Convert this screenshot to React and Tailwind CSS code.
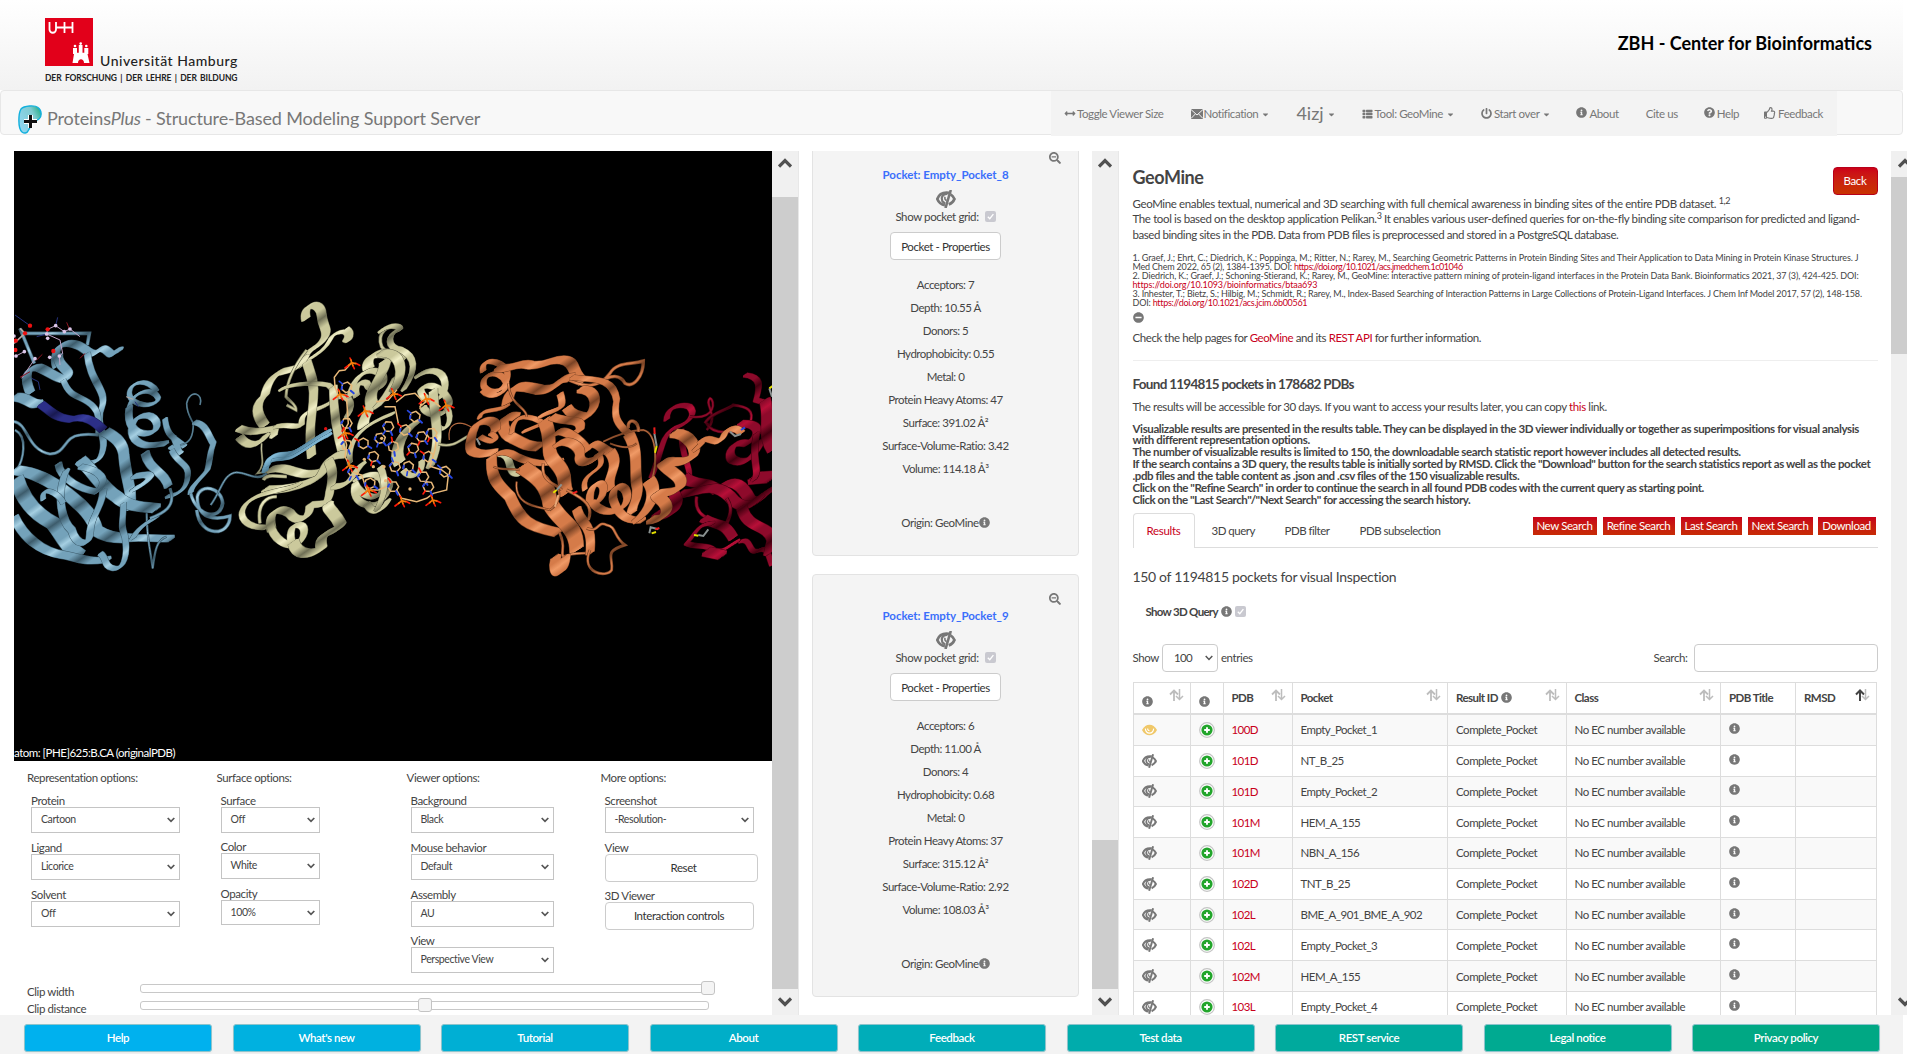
import React from "react";
import {
  FaInfoCircle, FaPowerOff, FaThList, FaQuestionCircle, FaRegThumbsUp,
  FaArrowsAltH, FaMinusCircle, FaSearchMinus, FaCaretDown,
} from "react-icons/fa";

/* ---------- small shared pieces ---------- */

function Chevron({ up, className = "" }) {
  return (
    <svg viewBox="0 0 14 10" className={`w-[14px] h-[10px] ${className}`} fill="none" stroke="#505050" strokeWidth="3.2">
      <path d={up ? "M1 8.5 7 2.5 13 8.5" : "M1 1.5 7 7.5 13 1.5"} />
    </svg>
  );
}

function Scrollbar({ before, thumb, border }) {
  return (
    <div className={`w-[27px] shrink-0 flex flex-col bg-[#f0f0f0] ${border}`}>
      <div className={`${before} shrink-0 pt-[12px] flex flex-col items-center`}>
        <Chevron up className="-mt-[5px] shrink-0" />
      </div>
      <div className={`${thumb} shrink-0 bg-[#cdcdcd]`} />
      <div className="mt-auto h-[26px] flex items-center justify-center">
        <Chevron />
      </div>
    </div>
  );
}

function EyeOff({ className }) {
  return (
    <svg viewBox="0 0 20 18" className={className} fill="none" stroke="#777">
      <path d="M13 2.8C5 1.700 2.400 6 1.300 9c1 2.400 3.400 5.600 7.600 6" strokeWidth="2.800" />
      <path d="M14.500 4.400c2 1 3.300 3.200 4 4.600-.8 2-2.600 4.300-5.700 5.600" strokeWidth="2.700" />
      <path d="M11.500 4C6.300 3.500 4.800 8 6.300 11c.8 1.500 2 2 3 2.100" strokeWidth="2.300" />
      <path d="M9 6.800c-.5 2 .3 3.400 1.700 3.600" strokeWidth="1.600" />
      <path d="M14.800 0 9.500 18" strokeWidth="2.600" />
    </svg>
  );
}

function EyeOn() {
  return (
    <svg viewBox="0 0 16 12" className="w-[15px] h-[12px]">
      <path d="M0 6C2 2 5 .3 8 .3S14 2 16 6c-2 4-5 5.700-8 5.700S2 10 0 6Z" fill="#f0c869" />
      <path d="M3.500 4.500C4 8 6 9.300 8 9.300s4-1.300 4.500-4.800" fill="none" stroke="#fff" strokeWidth="1.200" />
      <path d="M6 4.300C6 6 7 6.800 8 6.800" fill="none" stroke="#fff" strokeWidth="1.200" />
    </svg>
  );
}

function Check() {
  return (
    <span className="inline-flex w-[11px] h-[11px] rounded-[2px] bg-[#c9c9d0] items-center justify-center">
      <svg viewBox="0 0 10 10" className="w-[9px] h-[9px]" fill="none" stroke="#fff" strokeWidth="1.500"><path d="M2 5.200 4.200 7.400 8.200 2.400" /></svg>
    </span>
  );
}

/* ---------- header ---------- */

function Logo() {
  return (
    <div className="ml-[45px] pt-[18px] w-[200px] text-[#222]">
      <div className="flex items-end">
        <svg viewBox="0 0 48 48" className="w-[48px] h-[48px] shrink-0">
          <rect width="48" height="48" fill="#e2001a" />
          <path d="M4.500 4v7.500a3.200 3.200 0 0 0 6.500 0V4M12.500 9.500h7M19.500 4v11M27.500 4v11M19.500 9.500h8M11 9.500h2" fill="none" stroke="#fff" strokeWidth="1.800" />
          <g fill="#fff">
            <path d="M27.500 45 29 36h13.500L44.500 45h-5.500c0-5-6-5-6 0Z" />
            <path d="M28 30h4v4.800h1.800V27h3.700v7.800h1.800V30h4v6H28Z" />
            <circle cx="30" cy="28" r="1.300" /><circle cx="35.700" cy="25.600" r="1.300" /><circle cx="41.300" cy="28" r="1.300" />
          </g>
        </svg>
        <span className="ml-[7px] mb-[-5px] leading-[20px] text-[14px] font-medium tracking-[0.52px] whitespace-nowrap">Universität Hamburg</span>
      </div>
      <div className="mt-[7px] leading-[10px] text-[8.5px] font-bold tracking-[-0.1px] whitespace-nowrap [word-spacing:1.4px]">DER FORSCHUNG | DER LEHRE | DER BILDUNG</div>
    </div>
  );
}

function Caret() {
  return <FaCaretDown className="ml-[4px] mt-px w-[7px] h-[9px]" />;
}

function NavItem({ icon, children, gap = "mr-[27px]", caret }) {
  return (
    <a className={`flex items-center shrink-0 whitespace-nowrap ${gap}`}>
      {icon}{children}{caret && <Caret />}
    </a>
  );
}

function Header() {
  return (
    <header className="w-[1903px]">
      <div className="h-[90px] flex justify-between bg-linear-to-b from-white to-[#f2f2f2]">
        <Logo />
        <h1 className="mr-[31px] mt-[31px] text-[18px] leading-[24px] font-bold text-black tracking-normal whitespace-nowrap">ZBH - Center for Bioinformatics</h1>
      </div>
      <nav className="h-[45px] border border-[#e7e7e7] rounded-[4px] bg-[#f8f8f8] flex text-[#777]">
        <div className="w-[1050px] flex pl-[17px] pt-[14px]">
          <svg viewBox="0 0 24 29" className="w-[24px] h-[29px]">
            <defs>
              <linearGradient id="plogo" x1="0" y1="0.600" x2="1" y2="0"><stop offset="0" stopColor="#8fd6ef" /><stop offset="0.600" stopColor="#7fcbd0" /><stop offset="1" stopColor="#12a878" /></linearGradient>
            </defs>
            <path d="M3 4C6 .5 17 0 20 2.500c4 3 4 9 1 11.500-3 2-9 3-9 7 .5 2-1 3-2 5-1 2.500-4 2.500-6 1C-.5 23 .5 8 3 4Z" fill="url(#plogo)" stroke="#12b0dd" strokeWidth="1.400" />
            <path d="M12.500 10v13M6 16.500h13" stroke="#fff" strokeWidth="5" /><path d="M12.500 10v13M6 16.500h13" stroke="#111" strokeWidth="3" />
          </svg>
          <span className="ml-[5px] mt-px text-[18px] leading-[24px] tracking-[-0.14px] whitespace-nowrap">Proteins<i className="tracking-[-0.25px]">Plus</i> - Structure-Based Modeling Support Server</span>
        </div>
        <div className="w-[786px] h-[45px] bg-[#f3f3f3] flex items-center pl-[13px] text-[11.5px] tracking-[-0.4px]">
          <NavItem icon={<FaArrowsAltH className="w-[12px] h-[11px] mr-px" />}>Toggle Viewer Size</NavItem>
          <NavItem caret icon={<svg viewBox="0 0 12 10" className="w-[12px] h-[10px] mr-px"><rect width="12" height="10" fill="#777" /><path d="M0 .5 6 6 12 .5M0 9.500 4.300 5M12 9.500 7.700 5" fill="none" stroke="#f3f3f3" /></svg>}>Notification</NavItem>
          <NavItem caret gap="mr-[26px]"><span className="text-[18px] tracking-normal">4izj</span></NavItem>
          <NavItem caret icon={<FaThList className="w-[13px] h-[10px] mr-px" />}>Tool: GeoMine</NavItem>
          <NavItem caret gap="mr-[26px]" icon={<FaPowerOff className="w-[11px] h-[11px] mr-[2px]" />}>Start over</NavItem>
          <NavItem icon={<FaInfoCircle className="w-[11px] h-[11px] mr-[2px] mb-[2px]" />}>About</NavItem>
          <NavItem gap="mr-[26px]">Cite us</NavItem>
          <NavItem gap="mr-[25px]" icon={<FaQuestionCircle className="w-[11px] h-[11px] mr-[2px] mb-[2px]" />}>Help</NavItem>
          <NavItem gap="" icon={<FaRegThumbsUp className="w-[12px] h-[12px] mr-[2px] mb-[2px]" />}>Feedback</NavItem>
        </div>
      </nav>
    </header>
  );
}

/* ---------- molecule scene ---------- */

const LEFT = [
  ["blue", 12, "M60 115 L103 220"],
  ["blue", 12, "M75 130 H268 L262 165"],
  ["blue", 22, "M170 230 C150 160 210 140 262 183 C300 210 290 150 330 190 C345 200 345 175 362 180"],
  ["blue", 24, "M92 310 C70 260 80 232 115 232 C150 245 175 270 198 268 C225 240 170 235 175 195"],
  ["blue", 17, "M262 190 C270 280 325 300 305 355 C285 400 315 430 310 470 C305 510 290 520 250 520"],
  ["blue", 14, "M190 270 C210 330 250 315 280 350 C300 370 295 400 295 430"],
  ["blue", 28, "M42 322 C80 315 90 350 120 340"],
  ["navy", 22, "M122 342 C160 370 170 385 215 388 C260 372 290 400 310 420"],
  ["blue", 10, "M42 395 C85 400 80 480 150 492 C200 490 190 440 240 435 C270 430 285 435 295 435"],
  ["blue", 8, "M45 420 C85 440 70 510 50 540"],
  ["blue", 28, "M315 425 C345 440 372 460 372 500 C380 580 398 600 390 655"],
  ["blue", 13, "M470 305 C450 265 390 270 388 310 C390 350 470 355 475 325 C460 290 400 300 388 350"],
  ["blue", 19, "M388 350 C380 400 400 435 445 430 C485 425 475 378 440 376 C395 378 385 420 405 448 C430 475 460 465 500 460"],
  ["blue", 14, "M495 385 C500 440 520 440 555 470 M510 470 L545 490 M520 440 L540 490"],
  ["blue", 22, "M435 487 C445 540 495 545 505 590"],
  ["blue", 14, "M515 480 C530 520 570 520 563 560 C560 600 530 615 500 620"],
  ["blue", 5, "M600 345 C612 310 570 295 560 340 C560 370 575 390 580 400 C580 440 570 460 540 465"],
  ["blue", 16, "M582 397 C620 400 625 440 640 460 C625 500 632 510 622 540 C600 570 570 590 572 610"],
  ["blue", 12, "M572 610 C590 680 660 695 668 640 C665 590 600 580 592 620 C590 690 650 690 690 678 C690 740 600 745 590 660"],
  ["blue", 7, "M632 645 C665 600 670 550 710 547 C750 550 770 575 800 550"],
  ["blue", 32, "M45 540 C100 545 150 570 200 610 C250 650 280 680 290 722 C330 748 370 745 390 745"],
  ["blue", 36, "M50 565 C70 640 120 680 160 700 C190 740 200 770 240 797"],
  ["blue", 24, "M42 680 C70 740 120 785 190 795 C230 800 250 820 325 808"],
  ["blue", 32, "M240 510 C280 540 300 590 350 620 C380 650 420 650 470 655"],
  ["blue", 18, "M175 520 C180 570 250 600 290 605 C330 570 300 540 240 530"],
  ["blue", 20, "M200 540 C170 600 180 690 215 720 C230 770 270 770 270 730 C270 680 305 660 310 600"],
  ["blue", 16, "M370 640 C370 700 360 700 375 740 C385 800 370 840 340 835 C310 830 320 800 300 790"],
  ["blue", 14, "M130 630 C120 580 180 610 190 640"],
  ["blue", 22, "M400 560 C440 550 450 555 450 562 C430 590 400 595 400 600"],
  ["blue", 24, "M395 745 C430 740 480 748 515 745"],
  ["blue", 7, "M440 670 C440 750 455 800 458 835 C465 780 470 750 500 740"],
  ["blue", 18, "M398 745 C420 700 460 690 470 680"],
  ["blue", 10, "M510 595 C530 650 490 670 450 685"],
  ["cream", 24, "M918 88 C905 40 962 30 965 75 C968 110 985 120 975 140 C960 175 930 170 915 200"],
  ["cream", 14, "M1040 115 C1062 130 1050 160 1035 150 C1060 115 1000 120 990 150 C970 190 930 200 900 230"],
  ["cream", 26, "M915 200 C900 240 865 240 845 245 C810 260 800 290 795 315 C765 340 765 370 795 408"],
  ["cream", 10, "M920 180 C880 230 860 280 858 320 C870 335 890 345 888 360 L860 345"],
  ["cream", 22, "M715 415 C750 430 775 425 825 415 L820 440"],
  ["cream", 22, "M718 440 C745 475 775 468 800 435"],
  ["cream", 6, "M785 460 C780 500 800 520 772 550 L830 540"],
  ["cream", 16, "M825 410 C870 400 880 415 905 405 C900 350 960 370 1000 330 C1040 300 1070 340 1040 380"],
  ["cream", 24, "M920 215 C935 260 945 290 940 330 C935 390 925 420 935 500"],
  ["cream", 13, "M840 300 C880 275 960 280 985 285 C1020 310 1000 350 1005 400"],
  ["cream", 22, "M1000 290 C1000 370 1010 430 1030 500"],
  ["cream", 26, "M810 540 C860 520 900 570 960 545"],
  ["cream", 30, "M795 600 C850 600 900 590 940 570 C990 550 960 490 1045 492"],
  ["cream", 16, "M800 712 C740 715 705 680 740 640 C780 600 860 605 900 580"],
  ["cream", 12, "M790 570 C800 550 830 560 860 560 M780 700 C770 640 800 620 830 620"],
  ["cream", 24, "M815 720 C800 660 840 650 870 670 C890 700 930 690 930 645 C970 640 985 650 990 600 C1000 560 1000 540 985 510"],
  ["cream", 20, "M810 700 C820 750 860 770 890 765 C920 740 920 700 890 705 C860 710 870 780 900 790"],
  ["cream", 30, "M880 755 C890 800 935 795 965 775 C950 720 1010 730 1022 705 C1000 660 980 660 985 640"],
  ["cream", 22, "M1000 590 C1060 590 1060 540 1090 520"],
  ["cream", 12, "M1200 112 C1160 100 1130 130 1145 170 C1165 195 1190 200 1200 220"],
  ["cream", 30, "M1108 240 C1085 200 1150 165 1205 215"],
  ["cream", 18, "M1050 320 C1060 250 1120 220 1150 260 C1160 300 1110 310 1100 280 C1080 270 1060 290 1070 320"],
  ["cream", 32, "M1155 210 C1160 250 1100 300 1115 340 C1105 370 1085 390 1090 410"],
  ["cream", 14, "M1050 520 C1040 440 1100 400 1180 370"],
  ["cream", 24, "M1190 260 C1170 300 1150 330 1130 350"],
  ["cream", 18, "M1065 570 C1100 550 1150 540 1150 590 C1140 640 1080 620 1065 580 C1050 640 1120 670 1155 620 C1180 580 1170 570 1130 560"],
  ["cream", 18, "M1100 640 C1120 680 1150 660 1165 630"],
  ["sky", 17, "M795 545 C800 490 850 512 880 498 C920 478 950 448 990 433"],
  ["sky", 17, "M801 528 C805 482 850 502 880 488 C920 468 950 440 988 423"],
];

const RIGHT = [
  ["cream", 16, "M0 125 C30 100 60 108 60 118 C20 130 20 175 60 178 C110 200 110 240 70 300"],
  ["cream", 26, "M0 190 C60 180 80 240 40 300"],
  ["cream", 18, "M110 260 C150 230 190 240 195 280 C200 340 130 345 122 300 C150 260 220 320 205 350 C190 390 130 370 130 350"],
  ["cream", 14, "M200 350 C225 400 190 430 175 410"],
  ["cream", 24, "M160 300 C160 390 190 440 150 530"],
  ["cream", 32, "M105 400 C60 430 40 490 60 520"],
  ["cream", 17, "M70 540 C90 570 130 560 125 510 M0 530 C30 590 0 640 -10 660"],
  ["cream", 9, "M175 462 C220 475 240 450 265 438"],
  ["cream", 18, "M350 492 C400 485 380 540 405 550 C430 560 430 530 460 532"],
  ["red", 16, "M1095 255 C1145 260 1140 290 1128 330 L1180 345"],
  ["red", 17, "M860 390 C860 350 900 340 928 350 C950 370 930 400 880 415 C845 440 850 470 815 560"],
  ["red", 9, "M930 380 C1010 390 1005 330 990 325 C970 340 1020 380 980 420"],
  ["red", 10, "M975 400 C990 370 1040 360 1060 345 C1100 350 1125 360 1110 400 C1080 430 1000 440 980 400"],
  ["red", 24, "M1080 400 C1150 400 1140 440 1100 460 C1050 450 1040 500 1060 510 C1100 530 1130 490 1145 450"],
  ["red", 30, "M1155 330 C1170 380 1145 430 1178 480"],
  ["red", 14, "M905 420 C900 500 940 540 925 570"],
  ["red", 30, "M910 560 C940 590 980 570 1010 600 C1060 555 1090 590 1110 630 C1140 650 1150 600 1178 600"],
  ["red", 30, "M900 612 C960 610 1000 570 1050 620 C1080 660 1120 650 1140 620"],
  ["red", 28, "M825 672 C880 690 910 640 880 610"],
  ["red", 12, "M950 620 C940 680 990 690 1040 700 C1060 660 1050 640 1040 625"],
  ["red", 26, "M970 685 C1010 710 1030 690 1060 745"],
  ["red", 14, "M1080 755 C1120 740 1100 800 1140 780 C1165 770 1165 800 1176 825"],
  ["red", 15, "M1000 700 C950 700 950 730 920 760 C950 775 980 760 1000 780 C1030 790 1040 770 1075 752"],
  ["red", 32, "M978 785 L1028 796"],
  ["red", 44, "M1120 565 L1178 560"],
  ["red", 28, "M1085 650 C1100 720 1160 700 1176 745 L1165 790"],
  ["red", 18, "M1130 430 C1110 520 1145 540 1120 570"],
  ["orange", 16, "M310 245 C300 205 350 205 380 240 C395 290 340 325 312 290 C300 250 360 235 378 275 C385 315 330 330 308 300"],
  ["orange", 28, "M352 235 C400 240 410 215 450 225 C500 230 505 205 550 210 C590 215 575 255 610 275"],
  ["orange", 11, "M550 262 C620 300 660 290 690 250 C710 215 750 225 790 213 C790 260 760 295 735 280 C720 250 690 260 680 265"],
  ["orange", 32, "M382 340 C390 270 440 290 480 300 C540 300 525 265 575 262"],
  ["orange", 17, "M575 262 C640 270 700 260 710 330 C700 380 710 400 745 430"],
  ["orange", 13, "M298 385 C305 350 350 370 385 345"],
  ["orange", 30, "M410 380 C360 370 360 420 390 440 C430 460 440 470 480 470"],
  ["orange", 26, "M345 425 C360 390 310 380 285 410 C270 440 265 480 280 485 C310 500 330 485 345 487"],
  ["orange", 14, "M300 440 C350 470 360 440 330 430 M395 430 C400 360 460 380 490 400 L430 425"],
  ["orange", 19, "M340 500 C360 485 380 480 410 500 C450 520 500 525 545 512"],
  ["orange", 34, "M492 390 C520 440 495 480 520 510 C570 560 545 580 560 610"],
  ["orange", 18, "M480 380 C530 350 560 370 540 310"],
  ["orange", 26, "M600 298 C655 300 655 350 620 380 C590 380 570 370 560 352"],
  ["orange", 24, "M515 380 C560 400 610 380 600 420 C560 430 580 450 600 480"],
  ["orange", 24, "M530 430 C550 410 600 450 620 480 C650 440 660 480 695 488"],
  ["orange", 26, "M530 465 C560 440 600 470 600 490 C590 530 640 520 660 490"],
  ["orange", 14, "M660 500 C680 550 600 540 615 600"],
  ["orange", 28, "M690 485 C725 530 675 560 690 600"],
  ["orange", 28, "M745 430 C780 490 760 540 772 590 C775 640 755 640 755 670"],
  ["orange", 6, "M670 455 C720 430 760 420 790 420 C835 430 830 530 815 570 M690 460 C740 480 760 470 770 460"],
  ["orange", 11, "M745 415 C740 380 780 390 775 425"],
  ["orange", 21, "M630 640 C620 570 690 560 665 620 C640 660 630 630 640 640 C670 680 740 670 742 620 C740 575 690 580 700 630 C715 680 750 695 790 690"],
  ["orange", 34, "M805 570 C830 600 820 650 770 690"],
  ["orange", 30, "M880 430 C930 430 955 480 938 500 C900 530 860 505 848 520 C870 550 915 560 900 592 C870 620 815 600 832 620 C880 650 860 690 810 690"],
  ["orange", 20, "M960 455 C990 430 1010 475 1030 440 C1040 410 1070 410 1085 430 M945 480 L965 460"],
  ["orange", 28, "M335 500 C330 570 360 590 390 620 C420 690 440 710 535 728"],
  ["orange", 38, "M425 530 C470 560 505 580 510 640 C540 700 590 700 590 780"],
  ["orange", 7, "M340 530 C360 540 380 535 420 540 M410 575 C400 650 480 650 510 660 C540 640 540 610 535 600"],
  ["orange", 9, "M538 728 C560 770 540 790 550 800 C600 780 620 800 630 780"],
  ["orange", 30, "M528 800 C515 850 550 870 555 800"],
  ["orange", 24, "M590 655 C600 710 640 690 630 790"],
  ["orange", 9, "M630 780 C600 850 680 865 695 840 C700 800 670 785 735 765 C700 740 710 710 680 705 C650 690 660 730 620 715"],
  ["orange", 10, "M560 600 C620 630 640 650 625 690 M490 520 C480 580 530 580 545 600"],
  ["orange", 3, "M208 450 C200 395 240 390 275 412"],
  ["orange", 8, "M385 280 C390 350 440 350 440 380"],
];

const SHADES = {
  blue: ["#3d5c6c", "#74a2ba", "#a5cfe2"],
  sky: ["#4d7b93", "#82b9d6", "#9fd0ea"],
  navy: ["#191a52", "#2c2f88", "#3a3fa0"],
  cream: ["#6f6f55", "#cbc99c", "#f0eec6"],
  orange: ["#7a4325", "#d57b49", "#f09a66"],
  red: ["#42000f", "#8e0a2b", "#b80f38"],
};

/* A flat band: copies of the path are spread along a slanted nib, so its width varies with its direction. */
const NIB = [-0.5, -0.34, -0.17, 0, 0.17, 0.34, 0.5];

function Ribbon({ tone, w, d }) {
  if (w < 13) {
    return (
      <g fill="none">
        <path d={d} stroke={SHADES[tone][0]} strokeWidth={w * 0.85 + 1} />
        <path d={d} stroke={`url(#g-${tone})`} strokeWidth={Math.max(w * 0.85 - 3, 1.8)} />
      </g>
    );
  }
  const s = w * 0.34;
  return (
    <g fill="none" strokeLinejoin="round">
      {NIB.map((k) => <path key={k} d={d} transform={`translate(${k * w * 0.75} ${-k * w * 0.52})`} stroke={SHADES[tone][0]} strokeWidth={s + 3} />)}
      {NIB.map((k) => <path key={k} d={d} transform={`translate(${k * w * 0.75} ${-k * w * 0.52})`} stroke={`url(#g-${tone})`} strokeWidth={s} />)}
    </g>
  );
}

/* base pairs of the bound strand: centre x, centre y, turn */
const BASES = [
  [1040, 292, 10], [1040, 400, 30], [1090, 460, 0], [1140, 445, 20], [1180, 470, 50], [1120, 500, 15], [1185, 530, 40],
  [1110, 580, 5], [1180, 590, 30], [1165, 410, 35], [1215, 420, 12], [1240, 475, 44],
  [1245, 380, 10], [1265, 440, 22], [1285, 500, 5], [1225, 530, 10], [1270, 560, 33],
  [1295, 430, 25], [1335, 545, 12], [1285, 590, 36], [1040, 465, 40], [1060, 545, 25],
];
const BACKBONE = [
  "M1005 290 L1003 262 L1018 242 L1035 240 L1055 218", "M1005 290 L1015 318 L1040 330 L1045 400 L1030 428 L1040 465 L1035 500 L1048 525",
  "M1055 545 L1085 555 L1100 600 L1135 600 L1160 590", "M1130 335 L1165 330 L1190 300 M1155 350 L1185 350 L1195 400",
  "M1190 335 L1215 315 L1245 310 L1265 330 L1260 355 M1260 350 L1290 325 L1320 350",
  "M1295 530 L1325 540 L1345 555 L1340 600 L1300 610 L1280 625 L1250 635 L1205 625 L1190 600", "M1310 440 L1305 480 L1290 530",
];
const PHOSPHATES = [[1055, 218], [1020, 312], [1095, 362], [1035, 428], [1048, 525], [1105, 600], [1180, 310], [1278, 325], [1338, 345], [1205, 632], [1298, 630]];

function Ligand() {
  return (
    <g fill="none" strokeLinecap="round" strokeWidth="4.500">
      {BACKBONE.map((d) => <path key={d} d={d} stroke="#e8b878" />)}
      {BASES.map(([x, y, r], i) => (
        <g key={i} transform={`translate(${x} ${y}) rotate(${r})`}>
          <path d="M-14 -8 L0 -16 L14 -8 L14 8 L0 16 L-14 8 Z" stroke="#e8b878" />
          <path d="M-14 8 L-14 0 M14 8 L24 14" stroke="#2646e0" strokeWidth="6" />
          <path d={i % 2 ? "M0 16 L0 27" : "M-14 -8 L-25 -14"} stroke={i % 3 ? "#ff1708" : "#2646e0"} strokeWidth="5" />
        </g>
      ))}
      {PHOSPHATES.map(([x, y]) => (
        <g key={`${x}-${y}`} strokeWidth="5">
          <path d={`M${x - 20} ${y + 16} L${x - 8} ${y + 7} M${x + 12} ${y + 2} L${x + 24} ${y + 8} M${x - 2} ${y - 8} L${x - 5} ${y - 14} M${x + 4} ${y + 10} L${x + 8} ${y + 18}`} stroke="#ff1708" />
          <path d={`M${x - 9} ${y + 8} L${x} ${y} L${x + 12} ${y + 3} M${x} ${y} L${x - 2} ${y - 8} M${x} ${y} L${x + 4} ${y + 9}`} stroke="#f57c0a" />
        </g>
      ))}
      {[[1093, 508], [1120, 530], [1152, 530], [1157, 572], [1230, 597], [1145, 445]].map(([x, y]) => <circle key={x} cx={x} cy={y} r="5" fill="#e8b878" stroke="none" />)}
    </g>
  );
}

const ATOMS = [
  [90, 107, "r"], [75, 130, "r"], [143, 118, "r"], [47, 152, "r"], [46, 180, "r"], [160, 183, "r"],
  [167, 107, "w"], [193, 125, "w"], [210, 117, "w"], [140, 132, "w"], [143, 145, "w"], [73, 185, "w"], [48, 198, "w"], [105, 206, "w"], [149, 202, "w"], [178, 198, "w"], [42, 138, "w"],
];

function Molecule() {
  return (
    <svg viewBox="0 0 758 610" className="block w-[758px] h-[610px]">
      <defs>
        {Object.entries(SHADES).map(([k, [dark, mid, light]]) => (
          <linearGradient key={k} id={`g-${k}`} gradientUnits="userSpaceOnUse" x1="0" y1="0" x2="40" y2="52" spreadMethod="reflect">
            <stop offset="0" stopColor={dark} /><stop offset="0.350" stopColor={mid} /><stop offset="0.750" stopColor={mid} /><stop offset="1" stopColor={light} />
          </linearGradient>
        ))}
      </defs>
      <rect width="758" height="610" fill="#000" />
      <g transform="translate(-14 139) scale(0.33333)">
        {LEFT.map(([t, w, d], i) => <Ribbon key={i} tone={t} w={w} d={d} />)}
        <g fill="none" strokeWidth="3">
          <path d="M42 160 L75 130 L60 115" stroke="#b9a9a4" strokeWidth="5" />
          <path d="M140 132 L143 118 L167 107 L193 125 L210 117 L240 140 M48 198 L73 185 M140 132 L180 150 L188 190 L178 198 L180 225 M65 265 L105 206" stroke="#bfa2c6" />
          <path d="M45 75 L90 107 M167 107 L173 82 M110 140 L140 132 M95 265 L115 275 L120 300 M405 335 L415 350" stroke="#26337e" />
          <path d="M200 97 L208 117 M240 205 L255 190 M60 262 L90 245 M110 210 L127 193" stroke="#8d1420" />
          <path d="M378 320 L400 328" stroke="#b9a9a4" />
          <circle cx="977" cy="416" r="5" fill="#e01010" />
        </g>
        {ATOMS.map(([x, y, k]) => <circle key={`${x}${y}`} cx={x} cy={y} r={k === "r" ? 6.5 : 5.5} fill={k === "r" ? "#ee1111" : "#dcc6e8"} />)}
      </g>
      <g transform="translate(366 139) scale(0.33333)">
        {RIGHT.map(([t, w, d], i) => <Ribbon key={i} tone={t} w={w} d={d} />)}
        <g fill="none" strokeWidth="6">
          <path d="M545 583 L530 600 M823 430 L830 468 M290 445 L300 465 M835 718 L812 712 L808 730 M985 718 L970 738 L955 735 M1050 425 L1065 438 L1083 432 M1168 295 L1176 320" stroke="#8a9190" />
          <path d="M530 600 L520 608 M830 468 L825 488 M815 730 L828 726 M955 737 L942 735 M1178 288 L1168 295" stroke="#e3e000" />
          <path d="M578 610 L592 604 M823 412 L824 432 M826 718 L838 714" stroke="#ec1c1c" />
          <path d="M535 615 L525 650" stroke="#e8a878" />
          <path d="M1083 420 L1095 412" stroke="#2646e0" />
        </g>
      </g>
      <g transform="translate(-14 139) scale(0.33333)"><Ligand /></g>
    </svg>
  );
}

/* ---------- viewer options ---------- */

function Field({ label, value, w, h = "h-[26px]", gap = "mb-[8px]" }) {
  return (
    <div className={`${gap}`}>
      <div className="h-[13px] leading-[13px] whitespace-nowrap">{label}</div>
      <div className={`${w} ${h} border border-[#c4c4c4] bg-white flex items-center justify-between pl-[9px] pr-[4px] text-[10.5px] tracking-[-0.4px]`}>
        <span>{value}</span>
        <svg viewBox="0 0 8 6" className="w-[8px] h-[6px]" fill="none" stroke="#555" strokeWidth="1.700"><path d="M.7 1 4 4.400 7.300 1" /></svg>
      </div>
    </div>
  );
}

function OptionColumn({ title, w, children }) {
  return (
    <div className={`${w} shrink-0`}>
      <div className="h-[13px] leading-[13px] mb-[10px] whitespace-nowrap">{title}</div>
      <div className="pl-[4px]">{children}</div>
    </div>
  );
}

function PlainButton({ children, className }) {
  return <div className={`border border-[#ccc] rounded-[4px] bg-white text-[#333] flex items-center justify-center whitespace-nowrap ${className}`}>{children}</div>;
}

function Slider({ label, handle }) {
  return (
    <div className="flex items-start h-[17px]">
      <span className="w-[113px] leading-[17px] whitespace-nowrap">{label}</span>
      <div className="w-[569px] h-[9px] mt-px rounded-[3px] border border-[#c8c8c8] bg-white relative">
        <span className={`absolute -top-[4px] w-[14px] h-[14px] rounded-[3px] border border-[#c4c4c4] bg-[#f4f4f4] ${handle}`} />
      </div>
    </div>
  );
}

function Viewer() {
  return (
    <div className="w-[758px] shrink-0 flex flex-col">
      <div className="relative h-[610px] shrink-0">
        <Molecule />
        <span className="absolute left-0 bottom-px text-white leading-[14px] tracking-[-0.5px] whitespace-nowrap">atom: [PHE]625:B.CA (originalPDB)</span>
      </div>
      <div className="pt-[10px] pl-[13px] h-[220px] shrink-0 flex">
        <OptionColumn title="Representation options:" w="w-[189.500px]">
          <Field label="Protein" value="Cartoon" w="w-[149px]" />
          <Field label="Ligand" value="Licorice" w="w-[149px]" />
          <Field label="Solvent" value="Off" w="w-[149px]" />
        </OptionColumn>
        <OptionColumn title="Surface options:" w="w-[190px]">
          <Field label="Surface" value="Off" w="w-[99px]" gap="mb-[7px]" />
          <Field label="Color" value="White" w="w-[99px]" gap="mb-[8px]" />
          <Field label="Opacity" value="100%" w="w-[99px]" h="h-[25px]" />
        </OptionColumn>
        <OptionColumn title="Viewer options:" w="w-[194px]">
          <Field label="Background" value="Black" w="w-[143px]" />
          <Field label="Mouse behavior" value="Default" w="w-[143px]" />
          <Field label="Assembly" value="AU" w="w-[143px]" gap="mb-[7px]" />
          <Field label="View" value="Perspective View" w="w-[143px]" />
        </OptionColumn>
        <OptionColumn title="More options:" w="w-[160px]">
          <Field label="Screenshot" value="-Resolution-" w="w-[149px]" />
          <div className="h-[13px] leading-[13px]">View</div>
          <PlainButton className="w-[153px] h-[28px] mb-[7px]">
            <span className="pl-[5px]">Reset</span>
          </PlainButton>
          <div className="h-[13px] leading-[13px]">3D Viewer</div>
          <PlainButton className="w-[149px] h-[28px]">Interaction controls</PlainButton>
        </OptionColumn>
      </div>
      <div className="pl-[13px] pt-[2px]">
        <Slider label="Clip width" handle="left-[560px]" />
        <Slider label="Clip distance" handle="left-[277px]" />
      </div>
    </div>
  );
}

/* ---------- pocket cards ---------- */

const POCKETS = [
  { id: 8, acc: 7, depth: "10.55", don: 5, hyd: "0.55", atoms: 47, surf: "391.02", ratio: "3.42", vol: "114.18" },
  { id: 9, acc: 6, depth: "11.00", don: 4, hyd: "0.68", atoms: 37, surf: "315.12", ratio: "2.92", vol: "108.03" },
];

function PocketCard({ p }) {
  const rows = [
    `Acceptors: ${p.acc}`, `Depth: ${p.depth} Å`, `Donors: ${p.don}`, `Hydrophobicity: ${p.hyd}`, "Metal: 0",
    `Protein Heavy Atoms: ${p.atoms}`, `Surface: ${p.surf} Å²`, `Surface-Volume-Ratio: ${p.ratio}`, `Volume: ${p.vol} Å³`,
  ];
  return (
    <div className="w-[267px] h-[423px] shrink-0 mb-[18px] bg-[#f4f4f4] border border-[#e3e3e3] rounded-[4px] flex flex-col items-center pt-[18px] leading-[23px]">
      <FaSearchMinus className="self-end mr-[17px] w-[12px] h-[12px] text-[#777]" />
      <div className="h-[23px] -mt-px font-bold text-[#3b6ffb] tracking-[-0.02px]">Pocket: Empty_Pocket_{p.id}</div>
      <EyeOff className="w-[20px] h-[18px] mt-[4px] shrink-0" />
      <div className="flex items-center h-[16px] mb-[8px]">Show pocket grid:<span className="ml-[6px] flex"><Check /></span></div>
      <PlainButton className="w-[111px] h-[28px] mb-[13px] shrink-0">Pocket - Properties</PlainButton>
      {rows.map((r) => <div key={r} className="h-[23px] tracking-[-0.48px]">{r}</div>)}
      <div className="mt-[31px] flex items-center">Origin: GeoMine<FaInfoCircle className="w-[11px] h-[11px] text-[#777]" /></div>
    </div>
  );
}

/* ---------- result panel ---------- */

function A({ children, className = "" }) {
  return <a className={`text-[#c8001a] ${className}`}>{children}</a>;
}

const ROWS = [
  ["100D", "Empty_Pocket_1"], ["101D", "NT_B_25"], ["101D", "Empty_Pocket_2"], ["101M", "HEM_A_155"], ["101M", "NBN_A_156"],
  ["102D", "TNT_B_25"], ["102L", "BME_A_901_BME_A_902"], ["102L", "Empty_Pocket_3"], ["102M", "HEM_A_155"], ["103L", "Empty_Pocket_4"],
];

const COLS = "grid grid-cols-[57px_33px_69px_155.500px_118.500px_154.500px_75px_80.500px]";

function Sort({ active }) {
  return (
    <svg viewBox="0 0 15 12" className="w-[15px] h-[12px] -mt-[5px] ml-auto shrink-0" fill="none" strokeWidth="1.500">
      <path d="M5 12V1.500M1 5.500 5 1.500 9 5.500" stroke={active ? "#444" : "#bdbdbd"} strokeWidth={active ? 2 : 1.8} />
      <path d="M10.500 0v10.500M7 7l3.500 3.500L14 7" stroke="#bdbdbd" />
    </svg>
  );
}

function Info({ className = "" }) {
  return <FaInfoCircle className={`w-[11px] h-[11px] text-[#777] shrink-0 ${className}`} />;
}

function Cell({ children, className = "", head }) {
  return <div className={`border-r border-[#ddd] pl-[8px] flex items-center whitespace-nowrap ${head ? "pr-[6px]" : ""} ${className}`}>{children}</div>;
}

function Plus() {
  return (
    <svg viewBox="0 0 16 16" className="w-[16px] h-[16px]">
      <circle cx="8" cy="8" r="7.300" fill="#fff" stroke="#c4c4c4" strokeWidth="1.200" />
      <circle cx="8" cy="8" r="5.600" fill="#22a52b" />
      <path d="M8 5.200v5.600M5.200 8h5.600" stroke="#fff" strokeWidth="1.900" />
    </svg>
  );
}

function ResultTable() {
  return (
    <div className="mt-[10px] w-[744px] border-l border-t border-[#ddd]">
      <div className={`${COLS} h-[32px] border-b-2 border-[#ddd] font-bold tracking-[-0.55px]`}>
        <Cell head><Info className="mt-[8px]" /><Sort /></Cell>
        <Cell head><Info className="mt-[8px]" /></Cell>
        <Cell head>PDB<Sort /></Cell>
        <Cell head>Pocket<Sort /></Cell>
        <Cell head>Result ID<Info className="ml-[3px]" /><Sort /></Cell>
        <Cell head>Class<Sort /></Cell>
        <Cell head>PDB Title</Cell>
        <Cell head>RMSD<Sort active /></Cell>
      </div>
      {ROWS.map(([pdb, pocket], i) => (
        <div key={i} className={`${COLS} h-[30.800px] border-b border-[#ddd] tracking-[-0.48px] ${i % 2 ? "bg-white" : "bg-[#f9f9f9]"}`}>
          <Cell>{i === 0 ? <EyeOn /> : <EyeOff className="w-[15px] h-[14px]" />}</Cell>
          <Cell><Plus /></Cell>
          <Cell><A className="tracking-[-0.6px]">{pdb}</A></Cell>
          <Cell className="tracking-[-0.52px]">{pocket}</Cell>
          <Cell>Complete_Pocket</Cell>
          <Cell className="tracking-[-0.44px]">No EC number available</Cell>
          <Cell><Info className="-mt-[3px]" /></Cell>
          <Cell />
        </div>
      ))}
    </div>
  );
}

function RedButton({ children, className }) {
  return <div className={`h-[18px] bg-linear-to-b from-[#c80018] to-[#c72a05] text-white flex items-center justify-center whitespace-nowrap shrink-0 ${className}`}>{children}</div>;
}

function Results() {
  return (
    <main className="w-[772px] h-[864px] shrink-0 overflow-hidden pl-[13.500px] pr-[13.500px]">
      <div className="flex justify-between h-[45px]">
        <h2 className="mt-[14px] text-[18px] leading-[24px] font-bold">GeoMine</h2>
        <div className="mt-[16px] w-[45px] h-[28px] rounded-[4px] bg-linear-to-b from-[#cc0018] to-[#c83200] border border-[#b8001a] text-white flex items-center justify-center">Back</div>
      </div>
      <div className="leading-[15.500px] whitespace-nowrap tracking-[-0.37px]">
        <p className="h-[15px]">GeoMine enables textual, numerical and 3D searching with full chemical awareness in binding sites of the entire PDB dataset. <sup className="text-[9px]">1,2</sup></p>
        <p className="h-[15.500px] tracking-[-0.37px]">The tool is based on the desktop application Pelikan.<sup className="text-[9px]">3</sup> It enables various user-defined queries for on-the-fly binding site comparison for predicted and ligand-</p>
        <p className="h-[16px] tracking-[-0.43px]">based binding sites in the PDB. Data from PDB files is preprocessed and stored in a PostgreSQL database.</p>
      </div>
      <div className="mt-[10px] text-[9px] leading-[9px] whitespace-nowrap tracking-[-0.19px]">
        <p className="tracking-[-0.100px]">1. Graef, J.; Ehrt, C.; Diedrich, K.; Poppinga, M.; Ritter, N.; Rarey, M., Searching Geometric Patterns in Protein Binding Sites and Their Application to Data Mining in Protein Kinase Structures. J</p>
        <p>Med Chem 2022, 65 (2), 1384-1395. DOI: <A className="tracking-[-0.490px]">https://doi.org/10.1021/acs.jmedchem.1c01046</A></p>
        <p className="tracking-[-0.130px]">2. Diedrich, K.; Graef, J.; Schoning-Stierand, K.; Rarey, M., GeoMine: interactive pattern mining of protein-ligand interfaces in the Protein Data Bank. Bioinformatics 2021, 37 (3), 424-425. DOI:</p>
        <p><A className="tracking-[-0.120px]">https://doi.org/10.1093/bioinformatics/btaa693</A></p>
        <p className="tracking-[-0.165px]">3. Inhester, T.; Bietz, S.; Hilbig, M.; Schmidt, R.; Rarey, M., Index-Based Searching of Interaction Patterns in Large Collections of Protein-Ligand Interfaces. J Chem Inf Model 2017, 57 (2), 148-158.</p>
        <p>DOI: <A className="tracking-[-0.290px]">https://doi.org/10.1021/acs.jcim.6b00561</A></p>
      </div>
      <FaMinusCircle className="mt-[5px] w-[11px] h-[11px] text-[#777]" />
      <p className="mt-[7px] leading-[16px] tracking-[-0.43px]">Check the help pages for <A>GeoMine</A> and its <A>REST API</A> for further information.</p>
      <hr className="mt-[14px] border-[#eee]" />
      <h3 className="mt-[14px] text-[13.500px] leading-[18px] font-bold tracking-[-0.72px]">Found 1194815 pockets in 178682 PDBs</h3>
      <p className="mt-[5px] leading-[18px] tracking-[-0.39px]">The results will be accessible for 30 days. If you want to access your results later, you can copy <A>this</A> link.</p>
      <div className="mt-[7px] font-bold leading-[11.850px] whitespace-nowrap tracking-[-0.39px]">
        <p>Visualizable results are presented in the results table. They can be displayed in the 3D viewer individually or together as superimpositions for visual analysis</p>
        <p>with different representation options.</p>
        <p className="tracking-[-0.410px]">The number of visualizable results is limited to 150, the downloadable search statistic report however includes all detected results.</p>
        <p className="tracking-[-0.430px]">If the search contains a 3D query, the results table is initially sorted by RMSD. Click the "Download" button for the search statistics report as well as the pocket</p>
        <p className="tracking-[-0.400px]">.pdb files and the table content as .json and .csv files of the 150 visualizable results.</p>
        <p className="tracking-[-0.430px]">Click on the "Refine Search" in order to continue the search in all found PDB codes with the current query as starting point.</p>
        <p className="tracking-[-0.460px]">Click on the "Last Search"/"Next Search" for accessing the search history.</p>
      </div>
      <div className="mt-[7.500px] h-[35px] flex border-b border-[#ddd] whitespace-nowrap tracking-[-0.5px]">
        <div className="w-[62px] h-[35px] bg-white border border-b-0 border-[#ddd] rounded-t-[4px] flex items-center justify-center"><A className="tracking-[-0.300px]">Results</A></div>
        <span className="ml-[17px] w-[73px] leading-[35px]">3D query</span>
        <span className="w-[75px] leading-[35px]">PDB filter</span>
        <span className="leading-[35px]">PDB subselection</span>
        <div className="ml-auto mt-[4px] flex mr-[2px] tracking-[-0.4px]">
          <RedButton className="w-[64px] mr-[6px]">New Search</RedButton>
          <RedButton className="w-[72px] mr-[6px]">Refine Search</RedButton>
          <RedButton className="w-[61px] mr-[6px]">Last Search</RedButton>
          <RedButton className="w-[65px] mr-[5px]">Next Search</RedButton>
          <RedButton className="w-[58px]">Download</RedButton>
        </div>
      </div>
      <div className="mt-[19px] text-[14px] leading-[20px] tracking-[-0.33px]">150 of 1194815 pockets for visual Inspection</div>
      <div className="mt-[16px] ml-[13px] h-[18px] flex items-center font-bold tracking-[-0.7px]">Show 3D Query<Info className="ml-[3px] mr-[3px]" /><Check /></div>
      <div className="mt-[23px] h-[28px] flex items-center">
        Show
        <div className="ml-[3px] mr-[3px] w-[56px] h-[28px] border border-[#ccc] rounded-[4px] flex items-center justify-between pl-[11px] pr-[4px] tracking-[-0.6px]">100
          <svg viewBox="0 0 8 6" className="w-[8px] h-[6px]" fill="none" stroke="#555" strokeWidth="1.500"><path d="M.7 1 4 4.400 7.300 1" /></svg>
        </div>
        entries
        <span className="ml-auto mr-[6px]">Search:</span>
        <div className="w-[184px] h-[28px] border border-[#ccc] rounded-[4px] bg-white" />
      </div>
      <ResultTable />
    </main>
  );
}

/* ---------- footer ---------- */

const FOOT = [
  ["Help", "bg-[#00b1ee]"], ["What's new", "bg-[#00b1e0]"], ["Tutorial", "bg-[#00afd4]"], ["About", "bg-[#00aec8]"], ["Feedback", "bg-[#00adb9]"],
  ["Test data", "bg-[#00acac]"], ["REST service", "bg-[#00aa9d]"], ["Legal notice", "bg-[#00aa91]"], ["Privacy policy", "bg-[#00a884]"],
];

export default function App() {
  return (
    <div className="w-[1907px] h-[1054px] overflow-hidden bg-white font-['Lato',sans-serif] text-[11.5px] tracking-[-0.4px] text-[#444]">
      <Header />
      <div className="mt-[16px] h-[864px] flex pl-[14px] overflow-hidden">
        <Viewer />
        <Scrollbar before="h-[46px]" thumb="h-[792px]" border="border-r border-[#e8e8e8]" />
        <div className="w-[293px] shrink-0 pl-[13px] flex flex-col overflow-hidden">
          <div className="-mt-[18px] flex flex-col"><PocketCard p={POCKETS[0]} /><PocketCard p={POCKETS[1]} /></div>
        </div>
        <Scrollbar before="h-[689px]" thumb="h-[149px]" border="border-r border-[#e8e8e8]" />
        <Results />
        <Scrollbar before="h-[26px]" thumb="h-[177px]" border="" />
      </div>
      <footer className="w-[1903px] h-[39px] bg-[#f3f3f3] flex justify-between items-start pt-[9px] pl-[24px] pr-[23px] text-white">
        {FOOT.map(([t, c]) => <a key={t} className={`w-[188px] h-[28px] rounded-[3px] border border-[#8cc4cc] shadow-xs flex items-center justify-center font-semibold ${c}`}>{t}</a>)}
      </footer>
    </div>
  );
}
